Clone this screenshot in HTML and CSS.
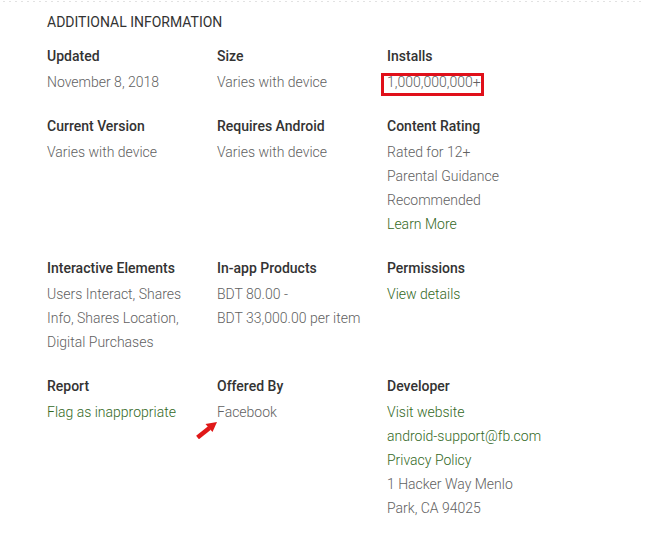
FILE: index.html
```html
<!DOCTYPE html>
<html>
<head>
<meta charset="utf-8">
<link rel="stylesheet" href="styles.css">
</head>
<body>
<div class="dots"></div>
<section class="info">
  <h2 class="heading">ADDITIONAL INFORMATION</h2>
  <div class="grid">
    <div class="item">
      <div class="title">Updated</div>
      <div class="value">November 8, 2018</div>
    </div>
    <div class="item">
      <div class="title">Size</div>
      <div class="value">Varies with device</div>
    </div>
    <div class="item">
      <div class="title">Installs</div>
      <div class="value"><span class="marked">1,000,000,000+</span></div>
    </div>

    <div class="item">
      <div class="title">Current Version</div>
      <div class="value">Varies with device</div>
    </div>
    <div class="item">
      <div class="title">Requires Android</div>
      <div class="value">Varies with device</div>
    </div>
    <div class="item">
      <div class="title">Content Rating</div>
      <div class="value">Rated for 12+</div>
      <div class="value">Parental Guidance Recommended</div>
      <div class="value"><a class="link">Learn More</a></div>
    </div>

    <div class="item">
      <div class="title">Interactive Elements</div>
      <div class="value">Users Interact, Shares Info, Shares Location, Digital Purchases</div>
    </div>
    <div class="item">
      <div class="title">In-app Products</div>
      <div class="value">BDT 80.00 -<br>BDT 33,000.00 per item</div>
    </div>
    <div class="item">
      <div class="title">Permissions</div>
      <div class="value"><a class="link">View details</a></div>
    </div>

    <div class="item">
      <div class="title">Report</div>
      <div class="value"><a class="link">Flag as inappropriate</a></div>
    </div>
    <div class="item">
      <div class="title">Offered By</div>
      <div class="value offered"><span>Facebook</span>
        <svg class="arrow" width="22" height="19" viewBox="0 0 22 19">
          <path d="M1.5 17.5 L13.5 8" stroke="#e01818" stroke-width="4.5" fill="none"/>
          <path d="M21 2 L16.5 12 L9.5 4 Z" fill="#e01818"/>
        </svg>
      </div>
    </div>
    <div class="item">
      <div class="title">Developer</div>
      <div class="value"><a class="link">Visit website</a></div>
      <div class="value"><a class="link">android-support@fb.com</a></div>
      <div class="value"><a class="link">Privacy Policy</a></div>
      <div class="value">1 Hacker Way Menlo Park, CA 94025</div>
    </div>
  </div>
</section>
</body>
</html>
```
FILE: styles.css
```css
html, body {
  margin: 0;
  padding: 0;
  background: #fff;
}
body {
  font-family: Roboto, "Liberation Sans", sans-serif;
  font-size: 14px;
  color: #616161;
  width: 647px;
  height: 540px;
  overflow: hidden;
}
.dots {
  height: 3px;
  margin: 0 6px 0 0;
  background-image: radial-gradient(circle, #e2e2e2 0.8px, transparent 1px);
  background-size: 6px 3px;
  background-position: 1px 0;
}
.info {
  padding: 7px 0 0 47px;
}
.heading {
  margin: 0;
  font-size: 14px;
  font-weight: 400;
  line-height: 24px;
  color: #333;
}
.grid {
  margin-top: 10px;
  display: grid;
  grid-template-columns: 170px 170px 170px;
  row-gap: 20px;
}
.item {
  padding-right: 14px;
}
.title {
  font-weight: 500;
  color: #333;
  line-height: 24px;
  margin-bottom: 2px;
}
.value {
  line-height: 24px;
  font-weight: 300;
  color: #616161;
}
.link {
  color: #33691e;
  text-decoration: none;
}
.marked {
  position: relative;
}
.marked::after {
  content: "";
  position: absolute;
  left: -6px;
  right: -3px;
  top: -1px;
  bottom: -6px;
  border: 3px solid #e0101a;
}
.offered {
  position: relative;
}
.arrow {
  position: absolute;
  left: -21px;
  top: 20px;
}
```
